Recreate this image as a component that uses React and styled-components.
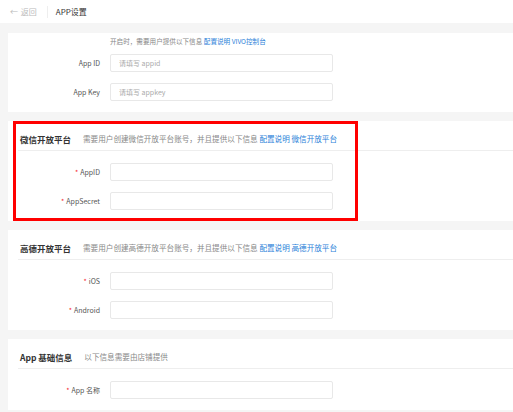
import React from 'react';
import styled, { createGlobalStyle } from 'styled-components';

const GlobalStyle = createGlobalStyle`
  html, body {
    margin: 0;
    padding: 0;
    background: #f5f5f5;
    font-family: 'Noto Sans CJK SC', 'Noto Sans', sans-serif;
    color: #333;
  }
`;

const sections = [
  {
    title: '微信开放平台',
    desc: '需要用户创建微信开放平台账号，并且提供以下信息',
    links: ['配置说明', '微信开放平台'],
    fields: ['AppID', 'AppSecret'],
    marked: true,
  },
  {
    title: '高德开放平台',
    desc: '需要用户创建高德开放平台账号，并且提供以下信息',
    links: ['配置说明', '高德开放平台'],
    fields: ['iOS', 'Android'],
  },
  {
    title: 'App 基础信息',
    desc: '以下信息需要由店铺提供',
    links: [],
    fields: ['App 名称'],
  },
];

export default function App() {
  return (
    <Page>
      <GlobalStyle />
      <TopBar>
        <Back>
          <span>←</span> 返回
        </Back>
        <Sep />
        <PageTitle>APP设置</PageTitle>
      </TopBar>
      <Content>
        <Card>
          <Fields top={3}>
            <Row compact>
              <Label />
              <Hint size={6.6}>
                开启时，需要用户提供以下信息 <Link>配置说明</Link> <Link>VIVO控制台</Link>
              </Hint>
            </Row>
            <Row>
              <Label>App ID</Label>
              <Input placeholder="请填写 appid" />
            </Row>
            <Row>
              <Label>App Key</Label>
              <Input placeholder="请填写 appkey" />
            </Row>
          </Fields>
        </Card>
        {sections.map((s) => (
          <Card key={s.title}>
            {s.marked && <Highlight />}
            <CardHead>
              <CardTitle>{s.title}</CardTitle>
              <Hint size={7.6}>
                {s.desc}
                {s.links.map((l) => (
                  <React.Fragment key={l}>
                    {' '}
                    <Link>{l}</Link>
                  </React.Fragment>
                ))}
              </Hint>
            </CardHead>
            <Fields top={12}>
              {s.fields.map((f) => (
                <Row key={f}>
                  <Label>
                    <Star>*</Star>
                    {f}
                  </Label>
                  <Input />
                </Row>
              ))}
            </Fields>
          </Card>
        ))}
      </Content>
    </Page>
  );
}

const Page = styled.div`
  width: 513px;
  min-height: 412px;
`;

const TopBar = styled.div`
  height: 23px;
  background: #fff;
  display: flex;
  align-items: center;
  padding-left: 10px;
`;

const Back = styled.div`
  font-size: 8px;
  color: #bbb;
  span {
    margin-right: 1px;
  }
`;

const Sep = styled.div`
  width: 1px;
  height: 12px;
  background: #eee;
  margin: 0 8px 0 10px;
`;

const PageTitle = styled.div`
  font-size: 8px;
  color: #333;
`;

const Content = styled.div`
  padding: 10px 0 0 8px;
  display: flex;
  flex-direction: column;
  gap: 9px;
`;

const Card = styled.div`
  position: relative;
  background: #fff;
`;

const Highlight = styled.div`
  position: absolute;
  left: 5px;
  top: 0;
  width: 345px;
  height: 100px;
  box-sizing: border-box;
  border: 3px solid #ff0000;
  pointer-events: none;
`;

const CardHead = styled.div`
  margin-left: 10px;
  padding: 12px 0 5px 2px;
  border-bottom: 1px solid #eee;
  display: flex;
  align-items: center;
  gap: 12px;
  height: 12px;
`;

const CardTitle = styled.div`
  font-size: 8.5px;
  font-weight: 700;
  color: #333;
  white-space: nowrap;
`;

const Hint = styled.div`
  font-size: ${(p) => p.size}px;
  line-height: 10px;
  color: #888;
  white-space: nowrap;
`;

const Link = styled.span`
  color: #2b7fd9;
`;

const Fields = styled.div`
  padding: ${(p) => p.top}px 0 11px;
  display: flex;
  flex-direction: column;
  gap: 11px;
`;

const Row = styled.div`
  display: flex;
  align-items: center;
  gap: 10px;
  height: ${(p) => (p.compact ? '10px' : '18px')};
  margin-bottom: ${(p) => (p.compact ? '-3px' : '0')};
`;

const Label = styled.div`
  width: 92px;
  text-align: right;
  font-size: 7px;
  color: #555;
  white-space: nowrap;
`;

const Star = styled.span`
  color: #f5222d;
  margin-right: 2px;
`;

const Input = styled.input`
  box-sizing: border-box;
  width: 223px;
  height: 18px;
  border: 1px solid #e8e8e8;
  border-radius: 2px;
  padding: 0 8px;
  font-family: inherit;
  font-size: 7px;
  outline: none;
  &::placeholder {
    color: #aaa;
  }
`;
